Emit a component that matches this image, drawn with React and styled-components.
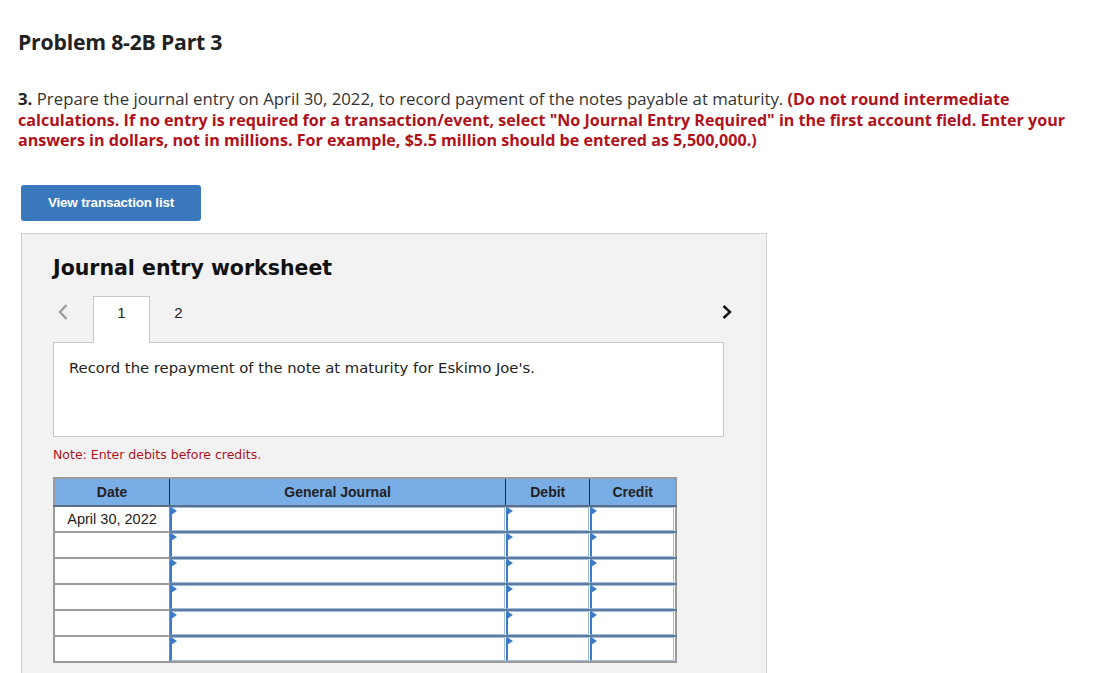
import React from "react";
import styled, { createGlobalStyle } from "styled-components";

const Global = createGlobalStyle`
  html, body { margin: 0; padding: 0; background: #fff; }
  body { font-family: "Open Sans", "Liberation Sans", sans-serif; color: #222; }
`;

const Page = styled.div`
  padding: 29px 18px 0 18px;
  width: 1118px;
  height: 673px;
  box-sizing: border-box;
  overflow: hidden;
`;

const Title = styled.h1`
  margin: 0;
  font-family: "Open Sans", "Liberation Sans", sans-serif;
  font-weight: 700;
  font-size: 21.2px;
  line-height: 26px;
  letter-spacing: -0.2px;
  color: #222;
`;

const Prompt = styled.p`
  margin: 34px 0 0 0;
  font-family: "Open Sans", "Liberation Sans", sans-serif;
  font-size: 16.8px;
  line-height: 19.5px;
  color: #333;
`;

const Strong = styled.strong`
  font-weight: 700;
  color: #222;
`;

const Red = styled.span`
  font-weight: 700;
  font-size: 16.1px;
  color: #b0121b;
`;

const ViewButton = styled.button`
  margin: 34px 0 0 3px;
  width: 180px;
  height: 36px;
  border: none;
  border-radius: 3px;
  background: #3a78be;
  color: #fff;
  font-family: "Liberation Sans", Arial, sans-serif;
  font-weight: 700;
  font-size: 13.5px;
  letter-spacing: -0.2px;
  display: flex;
  align-items: center;
  justify-content: center;
  cursor: pointer;
`;

const Panel = styled.section`
  margin: 12px 0 0 3px;
  width: 746px;
  height: 460px;
  box-sizing: border-box;
  background: #f2f2f2;
  border: 1px solid #cfcfcf;
  padding: 22px 31px 0 31px;
`;

const PanelTitle = styled.h2`
  margin: 0;
  font-family: "DejaVu Sans", Verdana, sans-serif;
  font-weight: 700;
  font-size: 20.5px;
  line-height: 24px;
  color: #111;
`;

const TabRow = styled.div`
  margin-top: 16px;
  display: flex;
  align-items: flex-end;
  height: 46px;
`;

const Arrow = styled.button`
  background: none;
  border: none;
  padding: 0 0 14px 0;
  width: 40px;
  height: 46px;
  display: flex;
  align-items: center;
  justify-content: ${(p) => (p.$right ? "flex-end" : "flex-start")};
  color: ${(p) => (p.$disabled ? "#9a9a9a" : "#111")};
  cursor: pointer;
  ${(p) => (p.$right ? "margin-left: auto; margin-right: 2px;" : "padding-left: 4px;")}
`;

const Tab = styled.div`
  width: 57px;
  box-sizing: border-box;
  display: flex;
  align-items: center;
  justify-content: center;
  font-family: "Liberation Sans", Arial, sans-serif;
  font-size: 15px;
  color: #222;
  padding-bottom: 15px;
  background: ${(p) => (p.$active ? "#fff" : "transparent")};
  border: 1px solid ${(p) => (p.$active ? "#c8c8c8" : "transparent")};
  border-bottom: none;
  position: relative;
  z-index: 1;
  margin-bottom: -1px;
  height: 47px;
`;

const Description = styled.div`
  width: 671px;
  height: 95px;
  box-sizing: border-box;
  background: #fff;
  border: 1px solid #c8c8c8;
  padding: 15px 15px;
  font-family: "DejaVu Sans", Verdana, sans-serif;
  font-size: 14.8px;
  line-height: 20px;
  color: #222;
`;

const Note = styled.div`
  margin-top: 10px;
  font-family: "DejaVu Sans", Verdana, sans-serif;
  font-size: 12.5px;
  line-height: 16px;
  color: #b0121b;
`;

const Table = styled.table`
  margin-top: 14px;
  border-collapse: collapse;
  width: 624px;
  border: 2px solid #9a9a9a;
  font-family: "Liberation Sans", Arial, sans-serif;
`;

const Th = styled.th`
  height: 26px;
  width: ${(p) => p.$w}px;
  background: #79ade6;
  font-size: 14px;
  font-weight: 700;
  color: #222;
  padding: 0;
  border-left: 1px solid #2a2a2a;
  border-bottom: 2px solid #5a6e86;
  &:first-child { border-left: none; }
`;

const DateCell = styled.td`
  height: 24px;
  background: #fff;
  border-top: 2px solid #9a9a9a;
  border-right: 1px solid #8a8a8a;
  font-size: 14.5px;
  color: #222;
  text-align: center;
  padding: 0;
  tr:first-child > & { border-top: none; }
`;

const InputCell = styled.td`
  height: 24px;
  padding: 0;
  border-top: 2px solid #617b9b;
  background: #fff;
  tr:first-child > & { border-top: none; }
`;

const Field = styled.div`
  position: relative;
  height: 24px;
  box-sizing: border-box;
  margin: 0 1px 0 0;
  background: #fff;
  border: 1px solid #9dbde4;
  border-left: 2px solid #3d7bc6;
  &::before {
    content: "";
    position: absolute;
    left: -1px;
    top: -1px;
    width: 0;
    height: 0;
    border-top: 4px solid transparent;
    border-bottom: 4px solid transparent;
    border-left: 6px solid #3d7bc6;
  }
`;

const rows = ["April 30, 2022", "", "", "", "", ""];

function ChevronLeft() {
  return (
    <svg width="12" height="18" viewBox="0 0 12 18">
      <path d="M9.5 2 L3 9 L9.5 16" fill="none" stroke="currentColor" strokeWidth="2.2" />
    </svg>
  );
}

function ChevronRight() {
  return (
    <svg width="12" height="18" viewBox="0 0 12 18">
      <path d="M2.5 3 L9 9 L2.5 15" fill="none" stroke="currentColor" strokeWidth="2.4" />
    </svg>
  );
}

export default function App() {
  return (
    <Page>
      <Global />
      <Title>Problem 8-2B Part 3</Title>
      <Prompt>
        <Strong>3.</Strong> Prepare the journal entry on April 30, 2022, to record payment of the notes payable at maturity.{" "}
        <Red>(Do not round intermediate</Red>
        <br />
        <Red>calculations. If no entry is required for a transaction/event, select "No Journal Entry Required" in the first account field. Enter your</Red>
        <br />
        <Red>answers in dollars, not in millions. For example, $5.5 million should be entered as 5,500,000.)</Red>
      </Prompt>
      <ViewButton>View transaction list</ViewButton>
      <Panel>
        <PanelTitle>Journal entry worksheet</PanelTitle>
        <TabRow>
          <Arrow $disabled>
            <ChevronLeft />
          </Arrow>
          <Tab $active>1</Tab>
          <Tab>2</Tab>
          <Arrow $right>
            <ChevronRight />
          </Arrow>
        </TabRow>
        <Description>Record the repayment of the note at maturity for Eskimo Joe's.</Description>
        <Note>Note: Enter debits before credits.</Note>
        <Table>
          <thead>
            <tr>
              <Th $w={115}>Date</Th>
              <Th $w={338}>General Journal</Th>
              <Th $w={84}>Debit</Th>
              <Th $w={85}>Credit</Th>
            </tr>
          </thead>
          <tbody>
            {rows.map((d, i) => (
              <tr key={i}>
                <DateCell>{d}</DateCell>
                <InputCell><Field /></InputCell>
                <InputCell><Field /></InputCell>
                <InputCell><Field /></InputCell>
              </tr>
            ))}
          </tbody>
        </Table>
      </Panel>
    </Page>
  );
}
